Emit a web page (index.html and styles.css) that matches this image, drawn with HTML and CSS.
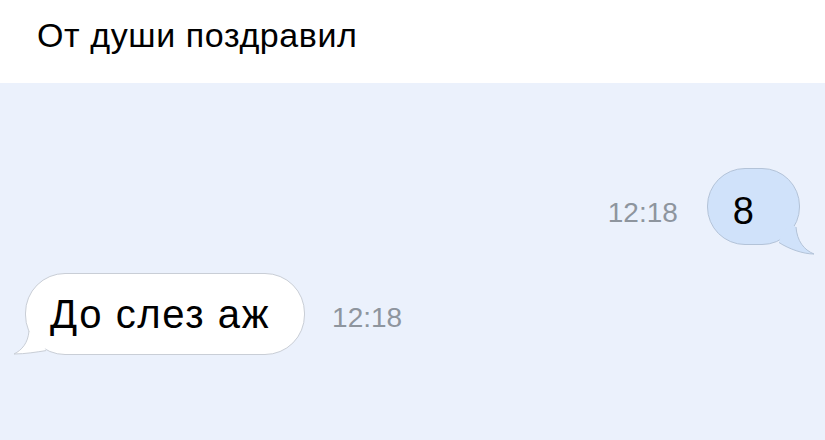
FILE: index.html
```html
<!DOCTYPE html>
<html lang="ru">
<head>
    <meta charset="UTF-8">
    <meta name="viewport" content="width=device-width, initial-scale=1.0">
    <title>От души поздравил</title>
    <link rel="stylesheet" href="styles.css">
</head>
<body>
    <div class="header">
        <h1>От души поздравил</h1>
    </div>

    <div class="chat">
        <div class="row row-out">
            <span class="time">12:18</span>
            <div class="bubble bubble-out">
                8
                <svg class="tail tail-out" width="42" height="33" viewBox="0 0 42 33">
                    <path class="tail-fill" d="M22 4 C23 18 30 27 40 31 C29 31 15 26 5 19.5 L8 8 L18 2 Z"/>
                    <path class="tail-line" d="M22 4 C23 18 30 27 40 31 C29 31 15 26 5 19.5"/>
                </svg>
            </div>
        </div>

        <div class="row row-in">
            <div class="bubble bubble-in">
                До слез аж
                <svg class="tail tail-in" width="40" height="30" viewBox="0 0 40 30">
                    <path class="tail-fill" d="M18 4 C17 16 11 23 3 27 C14 27 26 25 35 23.6 L30 14 L24 8 Z"/>
                    <path class="tail-line" d="M18 4 C17 16 11 23 3 27 C14 27 26 25 35 23.6"/>
                </svg>
            </div>
            <span class="time">12:18</span>
        </div>
    </div>
</body>
</html>
```

FILE: styles.css
```css
body {
    margin: 0;
    font-family: "Liberation Sans", Arial, sans-serif;
    background-color: #ebf1fc;
    height: 440px;
    overflow: hidden;
}

.header {
    background-color: #fff;
    height: 83px;
    padding: 16px 37px 0;
    box-sizing: border-box;
}

.header h1 {
    margin: 0;
    font-size: 34px;
    font-weight: normal;
    letter-spacing: 0.6px;
    color: #000;
    line-height: 38px;
}

.chat {
    padding: 85px 25px 0;
}

.row {
    display: flex;
    align-items: center;
}

.row-out {
    justify-content: flex-end;
    gap: 29px;
}

.row-in {
    margin-top: 28px;
    gap: 27px;
}

.time {
    font-size: 28px;
    color: #8e959e;
    margin-top: 12px;
}

.row-in .time {
    margin-top: 8px;
}

.bubble {
    position: relative;
    font-size: 38px;
    line-height: 44px;
    color: #000;
    border: 1px solid #c9ced6;
}

.bubble-out {
    background-color: #d0e2fa;
    border-color: #b3c3d8;
    border-radius: 38px;
    padding: 20px 45px 11px 25px;
}

.bubble-in {
    background-color: #fff;
    border-radius: 40px;
    font-size: 40px;
    letter-spacing: 1.6px;
    padding: 18px 34px 18px 24px;
}

.tail {
    position: absolute;
}

.tail-out {
    left: 66px;
    top: 54px;
}

.tail-in {
    left: -15px;
    top: 53px;
}

.tail-fill {
    stroke: none;
}

.tail-line {
    fill: none;
    stroke-width: 1;
}

.bubble-out .tail-fill {
    fill: #d0e2fa;
}

.bubble-out .tail-line {
    stroke: #b3c3d8;
}

.bubble-in .tail-fill {
    fill: #fff;
}

.bubble-in .tail-line {
    stroke: #c9ced6;
}
```
